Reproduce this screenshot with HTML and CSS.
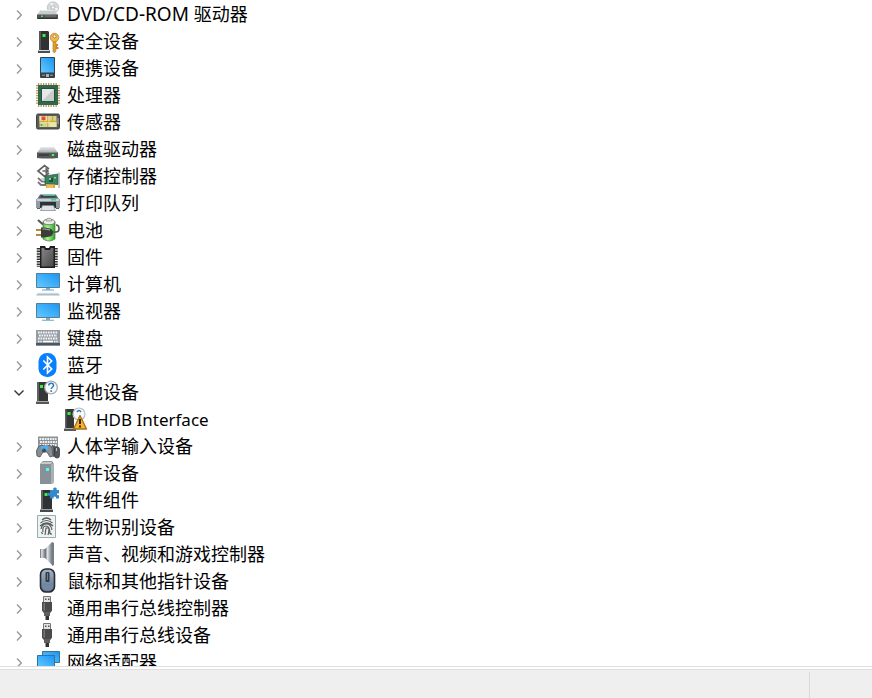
FILE: index.html
```html
<!DOCTYPE html>
<html lang="zh-CN">
<head>
<meta charset="utf-8">
<title>设备管理器</title>
<link rel="stylesheet" href="styles.css">
</head>
<body>
<svg class="defs" aria-hidden="true">
  <defs>
    <linearGradient id="sky" x1="0" y1="1" x2="1" y2="0"><stop offset="0" stop-color="#66caff"/><stop offset=".5" stop-color="#3eb0fa"/><stop offset="1" stop-color="#1e93ee"/></linearGradient>
    <linearGradient id="silver" x1="0" y1="0" x2="0" y2="1"><stop offset="0" stop-color="#e8e9ea"/><stop offset="1" stop-color="#a4a8aa"/></linearGradient>
    <linearGradient id="steel" x1="0" y1="0" x2="1" y2="0"><stop offset="0" stop-color="#59616a"/><stop offset=".35" stop-color="#dfe3e6"/><stop offset="1" stop-color="#717981"/></linearGradient>
    <linearGradient id="slate" x1="0" y1="0" x2="0" y2="1"><stop offset="0" stop-color="#a0b4ca"/><stop offset="1" stop-color="#5c7189"/></linearGradient>
    <linearGradient id="dark" x1="0" y1="0" x2="1" y2="1"><stop offset="0" stop-color="#858585"/><stop offset="1" stop-color="#4a4a4a"/></linearGradient>
    <linearGradient id="leaf" x1="0" y1="0" x2="1" y2="0"><stop offset="0" stop-color="#58bf40"/><stop offset=".4" stop-color="#a4f58a"/><stop offset="1" stop-color="#2ba627"/></linearGradient>
    <symbol id="chevron" viewBox="0 0 14 14"><path d="M5 2.500 9.300 7 5 11.500" fill="none" stroke="#999" stroke-width="1.400"/></symbol>
    <symbol id="chevron-open" viewBox="0 0 14 14"><path d="M2.500 4.500 7 9l4.500-4.500" fill="none" stroke="#333" stroke-width="1.400"/></symbol>
    <symbol id="tower" viewBox="0 0 24 25"><path d="M3 2h9l1 1v18H3z" fill="#303234"/><path d="M3 2h2v19H3z" fill="#55585a"/><path d="M2 21.500h12V24H2z" fill="#4a4c4e"/><path d="M3 21h10v1H3z" fill="#ddd"/><path d="M6.500 5h3v3h-3z" fill="#34f53e"/></symbol>
    <symbol id="usb" viewBox="0 0 24 25"><path d="M7.500.5h7v6h-7z" fill="#e2e2e2" stroke="#777"/><path d="M9 2.500h1.500V4H9zm3 0h1.500V4H12z" fill="#555"/><path d="M6 6h10v8.500L13.500 18h-5L6 14.500z" fill="#4b4b4b"/><path d="M7.500 7H9v7.500H7.500z" fill="#777"/><path d="M8 16h6v4H8z" fill="#5e5e5e"/><path d="M9.500 20h3.500v4H9.500z" fill="#333"/></symbol>
  </defs>
</svg>

<main class="tree-pane">
<ul class="tree">
  <li class="node"><button class="toggle" type="button" aria-expanded="false" aria-label="展开"><svg><use href="#chevron"/></svg></button>
    <svg class="icon" viewBox="0 0 24 25"><circle cx="17" cy="5.500" r="5.700" fill="#d5d9dc" stroke="#b4b8bb" stroke-width=".7"/><path d="m17 5.500-3-4.500h3zM17 5.500l4 3.500 1-3z" fill="#f4f5f6"/><circle cx="17" cy="5.500" r="1.800" fill="#f7f7f7" stroke="#aaa" stroke-width=".7"/><path d="M4.500 8h13l4.500 5H1z" fill="#c9cccd"/><path d="M5 8h12l1 1H4z" fill="#e8e9e9"/><path d="M1 12.500h21V17H1z" fill="#505355"/><path d="M2 15.800h19V17H2z" fill="#303234"/><path d="M5 13.500h2V15H5z" fill="#32ef3e"/><path d="M9 14h11" stroke="#858889" stroke-width=".8"/></svg>
    <span class="label label-caps">DVD/CD-ROM <span class="cjk">驱动器</span></span></li>
  <li class="node"><button class="toggle" type="button" aria-expanded="false" aria-label="展开"><svg><use href="#chevron"/></svg></button>
    <svg class="icon" viewBox="0 0 24 25"><use href="#tower"/><path d="M17 11h3v10.500L18.500 24 17 22.500z" fill="#dfa12f" stroke="#ac7620" stroke-width=".6"/><path d="M20 15h2v2h-1v1h1.500v2H20z" fill="#c88724"/><circle cx="18.500" cy="8.500" r="4.300" fill="#f0b849" stroke="#b77e22" stroke-width=".7"/><circle cx="18.500" cy="7.300" r="1.500" fill="#fff" stroke="#966520" stroke-width=".7"/></svg>
    <span class="label">安全设备</span></li>
  <li class="node"><button class="toggle" type="button" aria-expanded="false" aria-label="展开"><svg><use href="#chevron"/></svg></button>
    <svg class="icon" viewBox="0 0 24 25"><rect x="4" y="1" width="15" height="21" rx="1" fill="#34404a"/><path d="M5 2h13v14.500H5z" fill="url(#sky)"/><path d="M6 18.500h3V20H6zm8 0h3V20h-3z" fill="#778187"/><path d="M10 18h3v3h-3z" fill="#aab2b6"/></svg>
    <span class="label">便携设备</span></li>
  <li class="node"><button class="toggle" type="button" aria-expanded="false" aria-label="展开"><svg><use href="#chevron"/></svg></button>
    <svg class="icon" viewBox="0 0 24 25"><path d="M2 1.200h20M2 22.800h20M1.200 2v20M22.800 2v20" stroke="#ba9950" stroke-width="2.400" stroke-dasharray="1.300 1.200"/><path d="M2 2h20v20H2z" fill="#31684d"/><path d="M5 5h14v13.500H5z" fill="#24513c"/><path d="M6 6h12v12H6z" fill="#c9cccb"/><path d="M6 6h12L6 18z" fill="#e6e8e7"/></svg>
    <span class="label">处理器</span></li>
  <li class="node"><button class="toggle" type="button" aria-expanded="false" aria-label="展开"><svg><use href="#chevron"/></svg></button>
    <svg class="icon" viewBox="0 0 24 25"><rect x=".5" y="4" width="23" height="15" rx="1.500" fill="#5d5b59" stroke="#454240"/><path d="M3.500 6h17v11h-17z" fill="#c8dc91"/><path d="M3.500 6H11v5H3.500zM14 13h6.500v4H14z" fill="#e6e8aa"/><path d="M3.500 11.500h17M12 6v11M16.500 6v5.500" stroke="#e0a23a" stroke-width="1.500"/><path d="M12.800 6v11M3.500 12.700h17" stroke="#fff5b8" stroke-width=".6"/><path d="M5.500 6.500h4V10H8l-1 1v-1H5.500z" fill="#e94747"/><circle cx="5.500" cy="15" r="1" fill="#6f8f5c"/><path d="M22 8v6" stroke="#aaa"/></svg>
    <span class="label">传感器</span></li>
  <li class="node"><button class="toggle" type="button" aria-expanded="false" aria-label="展开"><svg><use href="#chevron"/></svg></button>
    <svg class="icon" viewBox="0 0 24 25"><path d="M5 10h13l4 6H1z" fill="url(#silver)"/><path d="M1 15.500h21V21q-10.500 1-21 0z" fill="#55585a"/><path d="M1 15.500h21" stroke="#898c8d"/><path d="M3 18h10" stroke="#36393b" stroke-width="1.500"/><path d="M15 17h4v2h-4z" fill="#2f8434"/><path d="M16 17h2v2h-2z" fill="#48ff50"/></svg>
    <span class="label">磁盘驱动器</span></li>
  <li class="node"><button class="toggle" type="button" aria-expanded="false" aria-label="展开"><svg><use href="#chevron"/></svg></button>
    <svg class="icon" viewBox="0 0 24 25"><path d="M13 5 8.500 1.500 2 7l6.500 5.500L13 9M6.500 7H12m-2.500-2.500L12 7 9.500 9.500" fill="none" stroke="#606060" stroke-width="1.700"/><path d="M2 14 6 17.500h5M2 18l3 3h5" fill="none" stroke="#777" stroke-width="1.800"/><path d="M5 14h5v3H6z" fill="#ced0d0"/><path d="m9 12 13-2v10.500L9 20z" fill="#37835d" stroke="#1f6041" stroke-width=".7"/><path d="M13 14h4v4h-4z" fill="#294b3b"/><path d="M13 14h2v2h-2zM18 13h2v1.500h-2z" fill="#9cc6a9"/><path d="M23 8.500V24" stroke="#a8a8a8" stroke-width="1.300"/><path d="M10 20.500h9V24h-9z" fill="#e6a338"/><path d="M12 21v3m2-3v3m2-3v3" stroke="#fff0a0" stroke-width=".7"/></svg>
    <span class="label">存储控制器</span></li>
  <li class="node"><button class="toggle" type="button" aria-expanded="false" aria-label="展开"><svg><use href="#chevron"/></svg></button>
    <svg class="icon" viewBox="0 0 24 25"><path d="M4 3.500h16l3 5H1z" fill="#59666f"/><path d="M5.500 4h13l1.500 2.500H4z" fill="#394248"/><path d="M7 4.500h12" stroke="#31cba8"/><path d="M0 8.500 2 7h20l2 1.500V17H0z" fill="#8f9aa2"/><path d="M1 8h22v2H1z" fill="#cbd1d5"/><path d="M15 8h5v1.500h-5z" fill="#39db83"/><path d="M4 11h16v6H4z" fill="#2c3235"/><path d="M6.500 14.500h11l2 5h-15z" fill="#dde2e5" stroke="#7b848a" stroke-width=".7"/><path d="M1 17h3v1H1zm19 0h3v1h-3z" fill="#596065"/></svg>
    <span class="label">打印队列</span></li>
  <li class="node"><button class="toggle" type="button" aria-expanded="false" aria-label="展开"><svg><use href="#chevron"/></svg></button>
    <svg class="icon" viewBox="0 0 24 25"><path d="M7 4h12v17q-6 4-12 0z" fill="url(#leaf)" stroke="#437d3b" stroke-width=".7"/><ellipse cx="13" cy="4" rx="6" ry="2.800" fill="#e9ece7" stroke="#777"/><path d="M10.500 1q2.500-2 5 0v2h-5z" fill="#ddd" stroke="#888" stroke-width=".7"/><path d="m2 2 5 4.500" stroke="#555" stroke-width="2"/><path d="M16 14h4q3 0 3-3.500T20 7" fill="none" stroke="#51544c" stroke-width="1.600"/><path d="M0 12h6m-6 5h6" stroke="#b58c31" stroke-width="1.800"/><path d="M5 9.500h3l6 1q3 1 3 4t-3 4l-6 1H5z" fill="#3a3d3a"/><path d="M6.500 11H9l5 1" fill="none" stroke="#aaada6" stroke-width="1.200"/></svg>
    <span class="label">电池</span></li>
  <li class="node"><button class="toggle" type="button" aria-expanded="false" aria-label="展开"><svg><use href="#chevron"/></svg></button>
    <svg class="icon" viewBox="0 0 24 25"><path d="M2.500 3v19M20 3v19" stroke="#333" stroke-width="3.500" stroke-dasharray="1.600 1"/><path d="M4 1h5l1 2h3l1-2h5v22H4z" fill="#1e1e1e"/><path d="M5.500 3H8l1 2h5l1-2h2.500v18.500h-12z" fill="url(#dark)"/></svg>
    <span class="label">固件</span></li>
  <li class="node"><button class="toggle" type="button" aria-expanded="false" aria-label="展开"><svg><use href="#chevron"/></svg></button>
    <svg class="icon" viewBox="0 0 24 25"><path d="M.5 1.500h23v14H.5z" fill="url(#sky)" stroke="#527e9c"/><path d="M10 16h4v2h-4z" fill="#8ea6b4"/><path d="M6 18h12" stroke="#84b6ce" stroke-width="1.200"/><path d="M2 21h20l2 2.500H0z" fill="#aebdc6"/><path d="M2 21.300h20" stroke="#d7e0e5"/></svg>
    <span class="label">计算机</span></li>
  <li class="node"><button class="toggle" type="button" aria-expanded="false" aria-label="展开"><svg><use href="#chevron"/></svg></button>
    <svg class="icon" viewBox="0 0 24 25"><path d="M.5 4.500h23v14H.5z" fill="url(#sky)" stroke="#527e9c"/><path d="M10 19h4v2h-4z" fill="#8ea6b4"/><path d="M6 21.300h12" stroke="#84b6ce" stroke-width="1.200"/></svg>
    <span class="label">监视器</span></li>
  <li class="node"><button class="toggle" type="button" aria-expanded="false" aria-label="展开"><svg><use href="#chevron"/></svg></button>
    <svg class="icon" viewBox="0 0 24 25"><path d="M0 4h24v15.500H0z" fill="#949da4"/><path d="M0 17h24v2.500H0z" fill="#4c565f"/><path d="M2 6.500h20M3 9.500h18M2 12.500h20" stroke="#f5f6f6" stroke-width="1.800" stroke-dasharray="1.700 .8"/><path d="M2 15.500h4m12 0h4" stroke="#eef0f1" stroke-width="1.500" stroke-dasharray="1.500 .7"/><path d="M7 15.500h10" stroke="#fff" stroke-width="1.500"/></svg>
    <span class="label">键盘</span></li>
  <li class="node"><button class="toggle" type="button" aria-expanded="false" aria-label="展开"><svg><use href="#chevron"/></svg></button>
    <svg class="icon" viewBox="0 0 24 25"><rect x="2.500" y="0" width="18" height="24" rx="8.500" fill="#087fff"/><path d="m7.300 7.500 8.400 8.500-4.200 4V4l4.200 4-8.400 8.500" fill="none" stroke="#fff" stroke-width="1.600"/></svg>
    <span class="label">蓝牙</span></li>
  <li class="node"><button class="toggle" type="button" aria-expanded="true" aria-label="折叠"><svg><use href="#chevron-open"/></svg></button>
    <svg class="icon" viewBox="0 0 24 25"><path d="M1 2h11v19H1z" fill="#343638"/><path d="M1 2h2v19H1z" fill="#606365"/><path d="M0 21.500h13V24H0z" fill="#555759"/><path d="M4 5h3v3H4z" fill="#34f53e"/><circle cx="15" cy="7.500" r="6.300" fill="#f8fbfc" stroke="#a9adaf" stroke-width="1.300"/><path d="M12.700 5.500q.2-2.200 2.500-2.200T17.500 5.500c0 1.700-2.300 1.800-2.300 3.500m0 1.200V12" fill="none" stroke="#287abd" stroke-width="1.500"/></svg>
    <span class="label">其他设备</span>
    <ul class="children">
      <li class="node">
        <svg class="icon" viewBox="0 0 24 25"><path d="M1 2h9v19H1z" fill="#343638"/><path d="M1 2h1.500v19H1z" fill="#606365"/><path d="M0 21.500h12V24H0z" fill="#555759"/><path d="M3.500 5h3v3h-3z" fill="#34f53e"/><circle cx="15" cy="7" r="6" fill="#f8fbfc" stroke="#b9bdbf" stroke-width="1.200"/><path d="M13 5q2-3 4 0" fill="none" stroke="#287abd" stroke-width="1.500"/><path d="M16 8.500 22.500 22h-13z" fill="#f5b52b" stroke="#a86e1e" stroke-width="1.300" stroke-linejoin="round"/><path d="M16 12v5m0 1.500v2" stroke="#3c2a0b" stroke-width="2"/></svg>
        <span class="label">HDB Interface</span></li>
    </ul></li>
  <li class="node"><button class="toggle" type="button" aria-expanded="false" aria-label="展开"><svg><use href="#chevron"/></svg></button>
    <svg class="icon" viewBox="0 0 24 25"><path d="M2 2.500h20v11H2z" fill="#8b9196"/><path d="M3.500 5h17M4 8h17M3.500 11h17" stroke="#f2f3f4" stroke-width="1.800" stroke-dasharray="1.800 .8"/><path d="m3 12 3-1 2 1h3l3-1 2 3 1 8-3 1-3-5H7l-3 5-3-1q-2-6 2-10z" fill="#858e95" stroke="#4b5359" stroke-width=".8"/><path d="M5 12h7v4H5z" fill="#51adf2"/><circle cx="8" cy="16.500" r="2" fill="#454b50"/><path d="m16 11 3 1 1 10-3 1z" fill="#535b61"/><rect x="18.500" y="13" width="5" height="11" rx="2.300" fill="#51575d" stroke="#30353a" stroke-width=".7"/><path d="M20.500 14v3" stroke="#bcc2c5"/></svg>
    <span class="label">人体学输入设备</span></li>
  <li class="node"><button class="toggle" type="button" aria-expanded="false" aria-label="展开"><svg><use href="#chevron"/></svg></button>
    <svg class="icon" viewBox="0 0 24 25"><path d="M4 3 7 0h9l2 3v18l-2 2H4z" fill="#8d969a"/><path d="M4 3h12v20H4z" fill="#889296"/><path d="m4 3 3-2h9l-1 2z" fill="#c3cbcd"/><path d="M15 3h3v18l-2 2h-1z" fill="#a9b1b4"/><path d="M10 7h3v3h-3z" fill="#45ffff"/></svg>
    <span class="label">软件设备</span></li>
  <li class="node"><button class="toggle" type="button" aria-expanded="false" aria-label="展开"><svg><use href="#chevron"/></svg></button>
    <svg class="icon" viewBox="0 0 24 25"><path d="M5 2h11v19H5z" fill="#303234"/><path d="M5 2h2v19H5z" fill="#606365"/><path d="M4 21.500h13V24H4z" fill="#484a4c"/><path d="M8.500 5h3v3h-3z" fill="#34f53e"/><path d="M14 2h3.500q-1-2.500 1.500-2.500T20.500 2H23v3.500q-2-1-2 .7t2 .8v3.500h-3q.5-2-1.200-2t-1.300 2H14V7.500q-3 .8-3-1.300t3-1.200z" fill="#3389cb"/></svg>
    <span class="label">软件组件</span></li>
  <li class="node"><button class="toggle" type="button" aria-expanded="false" aria-label="展开"><svg><use href="#chevron"/></svg></button>
    <svg class="icon" viewBox="0 0 24 25"><path d="M1.500.5h18v22h-18z" fill="#f0f2f2" stroke="#91b1ae"/><path d="M6 5q4.500-4 9 0M4.500 8q6-5 12 0M4 11q7-6 13 0M5 14q1-5 5.500-5t5.500 6M7 17q-1-6 3-6t4 8M9 20q1-7 1-7t2 0 0 7M5.500 17l1 2M15 18v2" fill="none" stroke="#555b5c" stroke-width="1.200"/></svg>
    <span class="label">生物识别设备</span></li>
  <li class="node"><button class="toggle" type="button" aria-expanded="false" aria-label="展开"><svg><use href="#chevron"/></svg></button>
    <svg class="icon" viewBox="0 0 24 25"><path d="M4 7h5v9H4z" fill="url(#steel)"/><path d="m9 7 7-7v23l-7-7z" fill="url(#steel)"/><path d="m16 0 2 1v22l-2 1z" fill="#747c84"/></svg>
    <span class="label">声音、视频和游戏控制器</span></li>
  <li class="node"><button class="toggle" type="button" aria-expanded="false" aria-label="展开"><svg><use href="#chevron"/></svg></button>
    <svg class="icon" viewBox="0 0 24 25"><rect x="4.500" y="0" width="14" height="23" rx="5.500" fill="url(#slate)" stroke="#292c30" stroke-width="1.600"/><path d="M6 15q5.500 3 11 0l-1 5q-4.500 3-9 0z" fill="#7189a4"/><rect x="9.500" y="3" width="4" height="10" rx="1" fill="#353a40"/><path d="M11.500 4v7" stroke="#737b83"/></svg>
    <span class="label">鼠标和其他指针设备</span></li>
  <li class="node"><button class="toggle" type="button" aria-expanded="false" aria-label="展开"><svg><use href="#chevron"/></svg></button>
    <svg class="icon"><use href="#usb"/></svg>
    <span class="label">通用串行总线控制器</span></li>
  <li class="node"><button class="toggle" type="button" aria-expanded="false" aria-label="展开"><svg><use href="#chevron"/></svg></button>
    <svg class="icon"><use href="#usb"/></svg>
    <span class="label">通用串行总线设备</span></li>
  <li class="node"><button class="toggle" type="button" aria-expanded="false" aria-label="展开"><svg><use href="#chevron"/></svg></button>
    <svg class="icon" viewBox="0 0 24 25"><path d="M6.500 1.500h17v11h-17z" fill="url(#sky)" stroke="#33739c"/><path d="M1.500 5.500h17v12h-17z" fill="url(#sky)" stroke="#33739c"/><path d="M6 20h8" stroke="#84b6ce"/></svg>
    <span class="label">网络适配器</span></li>
</ul>
</main>
<footer class="status-bar"><div class="status-main"></div><div class="status-side"></div></footer>
</body>
</html>
```
FILE: styles.css
```css
* {
  box-sizing: border-box;
}

body {
  margin: 0;
  height: 100vh;
  display: flex;
  flex-direction: column;
  background: #fff;
  color: #000;
  font-family: "Noto Sans", "Noto Sans CJK SC", sans-serif;
  font-size: 18px;
  line-height: 27px;
}

.defs {
  position: absolute;
  width: 0;
  height: 0;
}

.tree-pane {
  flex: 1;
  min-height: 0;
  overflow: hidden;
}

.tree,
.children {
  margin: 0;
  padding: 0;
  list-style: none;
}

.tree {
  padding: 1px 0 0 12px;
}

.node {
  display: grid;
  grid-template-columns: 14px 24px 1fr;
  column-gap: 10px;
  align-items: center;
}

.toggle {
  display: block;
  width: 14px;
  height: 14px;
  padding: 0;
  border: 0;
  background: none;
}

.toggle svg {
  display: block;
  width: 14px;
  height: 14px;
}

.icon {
  display: block;
  width: 24px;
  height: 25px;
  overflow: visible;
}

.label {
  height: 27px;
  margin-left: -3px;
  white-space: nowrap;
}

.label-caps {
  font-size: 19px;
}

.cjk {
  font-size: 18px;
}

.children {
  grid-column: 1 / -1;
  padding-left: 52px;
}

.children .node {
  grid-template-columns: 24px 1fr;
}

.children .label {
  margin-left: -2px;
  font-size: 17px;
}

.status-bar {
  flex: none;
  display: flex;
  height: 32px;
  padding-top: 2px;
  border-top: 1px solid #dfdfdf;
  background: linear-gradient(#fff 2px, #dfdfdf 2px, #dfdfdf 3px, #efefef 3px);
}

.status-main {
  flex: 1;
}

.status-side {
  width: 63px;
  margin-top: 3px;
  border-left: 1px solid #d9d9d9;
}
```
